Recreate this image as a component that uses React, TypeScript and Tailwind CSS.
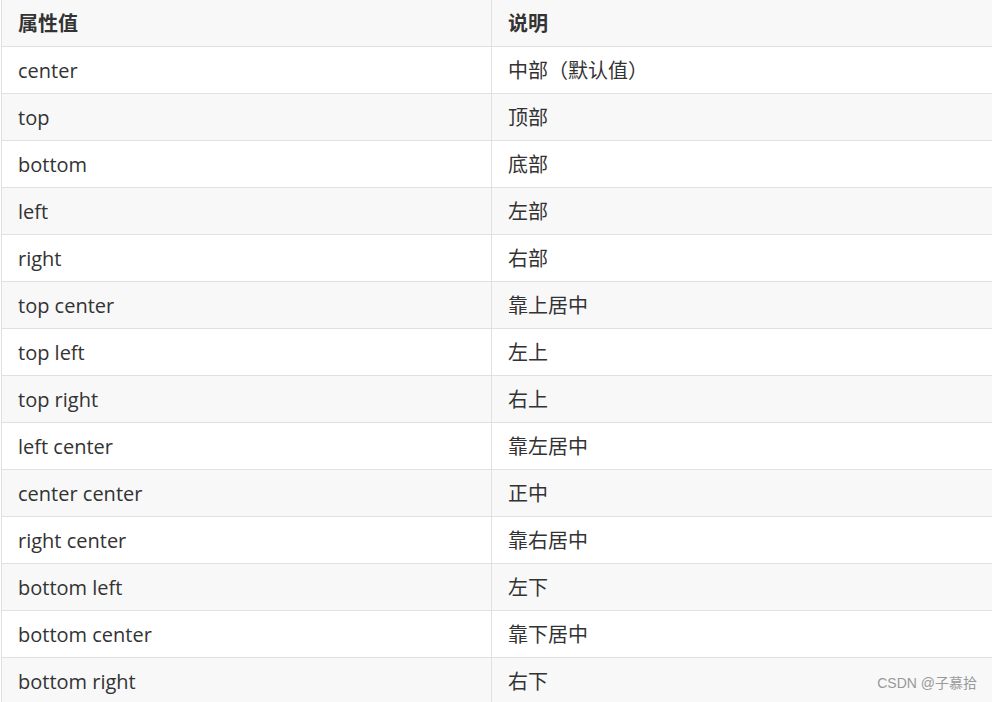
const ROWS: [string, string][] = [
  ["center", "中部（默认值）"],
  ["top", "顶部"],
  ["bottom", "底部"],
  ["left", "左部"],
  ["right", "右部"],
  ["top center", "靠上居中"],
  ["top left", "左上"],
  ["top right", "右上"],
  ["left center", "靠左居中"],
  ["center center", "正中"],
  ["right center", "靠右居中"],
  ["bottom left", "左下"],
  ["bottom center", "靠下居中"],
  ["bottom right", "右下"],
];

function Row({ a, b, head, shade }: { a: string; b: string; head?: boolean; shade: boolean }) {
  return (
    <div
      className={`grid grid-cols-[490px_1fr] h-[47px] border-b border-[#e0e0e0] ${shade ? "bg-[#f8f8f8]" : "bg-white"}`}
    >
      <div className={`flex items-center pl-4 pt-[2px] border-r border-[#e0e0e0] ${head ? "font-bold" : ""}`}>{a}</div>
      <div className={`flex items-center pl-4 pt-[2px] ${head ? "font-bold" : ""}`}>{b}</div>
    </div>
  );
}

export default function App() {
  return (
    <div className="relative w-[992px] h-[702px] overflow-hidden bg-white font-['Open_Sans','Noto_Sans_CJK_SC',sans-serif] text-[20px] text-[#333]">
      <div className="w-[1010px] border-l border-[#e0e0e0] ml-px -mt-px">
        <div className="h-px" />
        <Row a="属性值" b="说明" head shade />
        {ROWS.map(([a, b], i) => (
          <Row key={a} a={a} b={b} shade={i % 2 === 1} />
        ))}
      </div>
      <span className="absolute right-[15px] bottom-[8px] text-[14px] text-[#999] font-['Liberation_Sans','Noto_Sans_CJK_SC',sans-serif]">
        CSDN @子慕拾
      </span>
    </div>
  );
}
